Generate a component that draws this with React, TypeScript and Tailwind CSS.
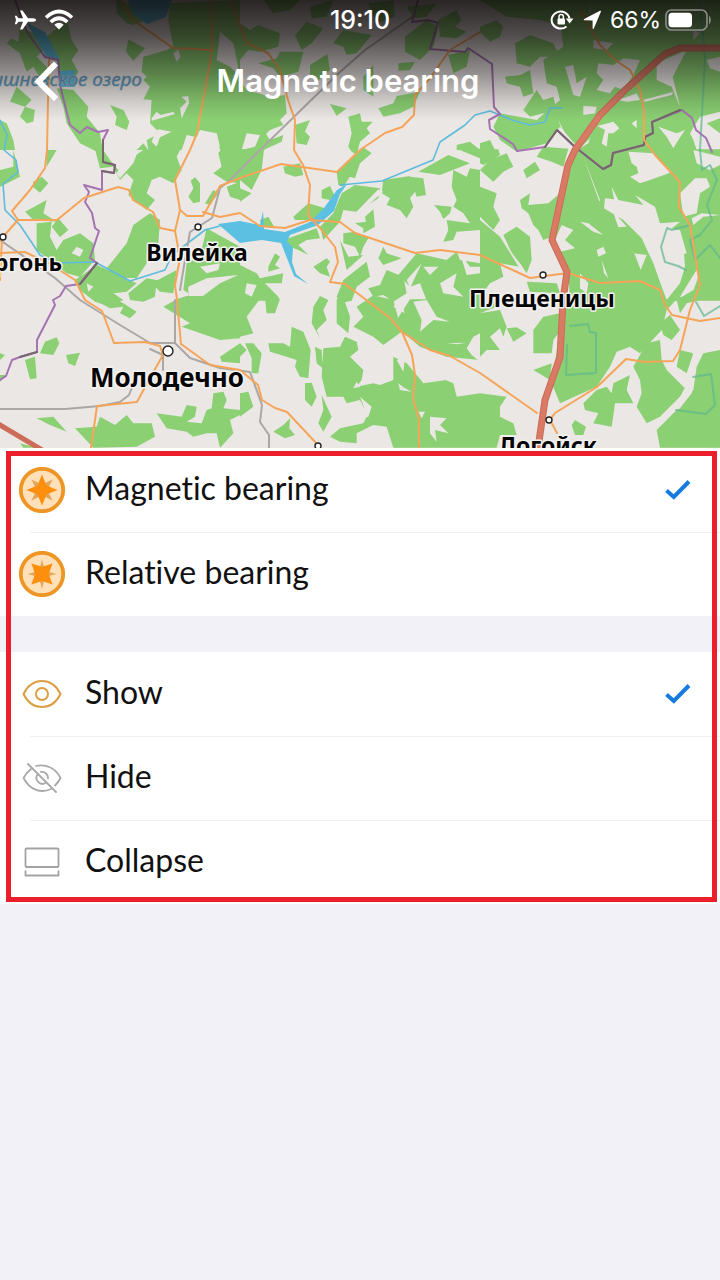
import { useState } from "react";
import type { ReactNode } from "react";

type Tile = { x: number; y: number; forest: string; clearings?: string };

/* Map tiles: 240 x 150 units each, geometry stored at three times that scale. */
const tiles: Tile[] = [
  {
    x: 0,
    y: 0,
    forest:
      "M510 10L720 0V450H660L650 400 600 390 590 412 560 405 545 450H445L440 420 480 400 450 370 455 300 430 298 450 260 430 240 440 230 425 215 430 170 500 150 520 140 505 60ZM350 40L350 0 420 20 440 60 400 75 380 70ZM385 118L435 145 400 182 378 155ZM60 80L100 100 130 150 110 170 140 200 150 240 130 250 100 200 80 215 60 160 20 130 35 115 55 125ZM140 110L200 60 215 120 235 150 215 180 235 215 220 240 180 250 175 180ZM170 265L220 270 265 320 260 350 300 400 308 452 285 452 240 430 200 370 190 320ZM330 315L370 330 388 365 380 390 345 375 350 350ZM60 350L75 320 105 330 100 365 80 370ZM50 260L95 300 75 320 30 305ZM410 450L430 430 445 450ZM0 360L20 370 40 420 45 450H0ZM205 330L240 305 250 315 220 340Z",
    clearings:
      "M455 355L470 335 482 345 520 335 525 342 455 362ZM545 290L565 288 567 310 545 355 540 325 560 305ZM465 400L475 388 515 395 480 412 470 440 455 425ZM595 395L650 400 660 440 640 415 600 412ZM520 160L535 148 542 170 530 185ZM660 95L700 130 720 230 690 200 650 180Z",
  },
  {
    x: 240,
    y: 0,
    forest:
      "M0 240L20 270 90 290 135 285 140 340 120 360 130 375 90 390 70 410 75 450 0 452ZM0 70L30 90 55 75 120 100 115 140 60 155 25 150 0 180ZM165 105L200 65 250 85 215 130 185 150ZM280 130L310 90 395 105 350 160 320 165 310 140ZM55 190L110 175 120 155 190 155 175 215 120 230 100 205ZM210 195L262 162 270 210 230 245 210 230ZM270 312L320 325 290 348ZM415 325L460 310 470 288 540 275 520 320 480 340 430 350ZM475 190L525 185 510 210 475 212ZM325 350L360 340 365 365 398 365 380 385 390 400 360 425 350 465 335 455 325 440 335 400ZM165 375L210 360 195 395 210 410 200 435 170 430ZM70 390L90 420 130 405 125 425 70 450ZM495 110L560 60 595 80 580 140 540 180 495 155ZM595 60L650 30 665 60 645 80 680 95 650 115 600 110ZM625 165L690 150 680 200 640 220ZM650 435L690 425 720 450 650 450ZM385 10L460 0 465 50 410 70ZM370 230L400 195 400 290 370 270ZM70 0H180L150 30 100 40ZM500 20L590 10 560 50 520 55ZM210 20L280 0 260 50 215 55Z",
    clearings: "M20 400L60 405 45 440 5 450ZM0 200L15 215 10 240 0 245Z",
  },
  {
    x: 480,
    y: 0,
    forest:
      "M240 60L330 40 340 0H720V450H300L240 380 200 430 110 455 60 420 40 380 60 340 170 360 240 300 230 260 200 250 190 180 250 140ZM105 130L150 105 220 130 240 170 180 170 150 200 110 190ZM75 230L120 225 150 210 160 280 130 290 120 260 80 250ZM130 330L170 270 190 300 220 290 230 330 150 350ZM0 80L50 60 70 80 60 110 30 125 0 95ZM0 0H340L320 60 250 80 180 60 80 50ZM0 430L30 420 45 450H0Z",
    clearings:
      "M355 190L400 195 430 175 480 180 460 225 430 270 405 260 390 280 350 270 370 240 350 220ZM255 200L280 195 290 250 320 230 300 290 280 285ZM530 190L620 150 578 230 600 320 575 260 530 240ZM235 360L275 440 258 425ZM310 318L350 320 345 340 310 345ZM352 378L400 365 418 385 400 400 385 400 380 440 365 430 375 390ZM300 445L330 415 325 430ZM535 380L590 400 615 390 595 420 580 445 560 410ZM630 400L660 350 720 335V355L680 370 720 400V450H650L640 420ZM680 180L720 170V215L690 205ZM415 300L470 280 480 300 440 305ZM490 300L580 275 575 285 495 305ZM340 120L400 130 380 150 340 145ZM640 90L660 100 640 120ZM455 370L470 360 470 385Z",
  },
  {
    x: 0,
    y: 150,
    forest:
      "M140 0H170L140 50ZM285 -2H308L330 30 355 60 400 20 430 0H540L530 20 545 60 520 100 480 80 455 90 440 130 465 150 440 180 385 135 400 90 380 70 360 90 340 50 300 55ZM100 95L125 80 145 100 120 128 98 110ZM75 185L140 150 130 190 170 215 100 210ZM155 230L175 205 205 240 180 262ZM110 220L155 215 150 260 170 300 190 270 240 250 280 280 285 330 240 380 200 370 110 300ZM320 355L380 280 400 225 450 190 480 210 475 280 440 310 440 340 410 385 350 380ZM225 390L290 345 410 400 380 425 340 430 370 450 330 470 285 455 240 420ZM385 430L440 385 470 390 465 440 430 455 390 450ZM455 400L530 360 520 430 480 425ZM655 10L665 -4 720 0V100L680 95 640 70 665 50ZM680 110L720 95V150L690 140ZM565 140L580 115 572 92 585 82 600 100 600 155 580 160ZM620 235L720 290V452H560L565 430 550 420 560 340 600 320ZM0 60L40 50 40 0 55 60 60 80 0 110ZM615 160L640 120 655 130 630 165Z",
    clearings:
      "M350 70L380 20 415 0 400 40 360 85ZM600 350L660 340 655 360 620 370ZM565 410L620 385 715 375 660 400 600 445 565 440ZM230 290L250 300 240 320 215 310ZM260 400L280 410 265 425Z",
  },
  {
    x: 240,
    y: 150,
    forest:
      "M0 -2H72L65 60 35 120 0 90ZM0 115L35 130 0 155ZM130 50L180 40 190 75 165 80 135 70ZM290 65L340 20 370 -8 395 10 360 40 345 85 330 80 310 110 295 105ZM160 200L205 160 255 175 230 210 165 210ZM245 120L270 108 285 140 270 150 245 145ZM60 210L85 200 105 235 65 230ZM305 130L345 105 420 115 415 145 350 185 310 180 300 215 250 270 240 230 280 190ZM130 270L230 235 240 265 200 270 175 285 205 315 175 300 150 290ZM430 90L510 78 525 125 510 145 520 170 500 205 480 180 440 165 450 145 425 130ZM510 80L550 85 558 135 530 140ZM535 65L625 15 690 40 600 75ZM650 -4H720V25ZM582 165L635 170 630 190 610 207 600 185ZM640 60L680 80 690 55 720 60V240L650 245 640 270 610 275 625 240 620 210 690 220 670 190 640 170 650 150 635 110ZM345 220L378 215 375 200 400 178 405 230 370 250 370 235ZM310 250L345 245 385 265 370 290 360 320 345 290 310 280ZM300 270L325 320 370 315 320 360ZM430 290L440 310 485 325 430 345 415 325ZM220 350L260 325 270 335 260 350 270 380 240 370ZM85 350L105 310 120 320 105 345 120 355 85 365ZM0 345L50 370 60 385 130 370 125 400 75 400 115 440 118 452H0ZM290 440L310 390 380 335 390 380 350 410 335 452 300 460ZM385 415L420 405 440 360 490 380 500 430 460 455 430 435 400 440ZM475 375L530 310 620 330 650 305 660 330 720 340V452H560L540 400 510 410Z",
    clearings:
      "M415 118L430 125 350 195 345 190ZM500 390L545 340 510 415ZM550 350L595 350 570 375ZM600 400L650 370 640 410 670 440 610 430ZM660 310L690 350 720 350V370L680 375ZM20 400L50 405 35 440 15 430Z",
  },
  {
    x: 480,
    y: 150,
    forest:
      "M290 -2H720V452H270L265 370 215 280 230 170ZM30 30L80 10 100 50 70 65 40 95 0 60ZM0 -2H55L60 15 10 45 0 40ZM130 60L165 35 180 60 140 85ZM0 110L50 130 40 170 60 210 40 240 0 200ZM120 150L150 130 145 165 205 160 240 130 215 260 190 270 175 240 160 225 145 190 125 175ZM70 255L110 230 150 260 155 330 140 370 120 340 100 320ZM190 -10L265 -4 250 50 215 35 170 20ZM0 210L60 260 120 350 60 340 70 380 30 400 0 440ZM140 395L230 400 240 430 150 425Z",
    clearings:
      "M445 5L520 10 575 65 560 72 510 90 480 100 450 80 475 70 470 50 455 40ZM372 175L375 145 402 148 395 110 415 150 490 165 465 135 525 170 540 220 600 215 570 240 610 280 615 350 600 400 560 450 545 410 520 340 485 265 430 210ZM560 235L600 240 620 310 555 330ZM300 215L325 220 370 255 340 245ZM398 182L440 230 415 232ZM645 85L680 85 690 110 660 130 650 190 610 200 600 130ZM445 290L460 310 500 315 482 360 465 315ZM245 225L280 240 255 270 285 295 240 305 225 270ZM350 300L370 290 378 310 355 320ZM640 0L720 20V45L690 60 650 40ZM365 330L385 385 372 370ZM635 205L665 190 720 195 670 200 640 225ZM60 260L130 355 122 360ZM300 370L325 400 320 430 300 415ZM310 20L360 150 358 155ZM640 375L650 360 655 380 630 450 600 440Z",
  },
  {
    x: 0,
    y: 300,
    forest:
      "M285 0L330 -10 350 0 370 10 410 35 390 55 360 40 370 20 330 25ZM530 -2L560 -12H720V115L660 120 545 80 570 70 490 20ZM120 160L135 125 170 112 178 130 160 165ZM198 165L240 158 225 198 205 190ZM75 180L105 170 110 235 90 238ZM110 355L160 350 200 395 150 375ZM225 385L290 380 300 350 345 375 380 345 400 370 455 370 465 410 410 440 280 443ZM470 340L545 350 560 315 590 320 585 350 560 365 605 370 620 330 635 325 640 280 670 275 680 300 670 325 720 330V345L690 360 700 400 660 443 650 400 620 400 580 410 560 395 500 385ZM660 170L720 130V190L665 185ZM0 160L15 165 0 180ZM0 225H20L0 245ZM60 430L110 443H70Z",
  },
  {
    x: 240,
    y: 300,
    forest:
      "M0 -2H60L50 10 20 50 40 100 0 110ZM75 -4H120L105 40 80 40ZM220 20L240 -12 265 0 250 30 260 60 230 90 240 115 215 70ZM290 -2H312L330 50 325 100 290 70ZM340 80L370 50 350 20 400 -14 460 0 485 95 430 135 400 110ZM470 60L510 -2H720V180L620 170 540 140 480 90ZM15 130L40 130 65 160 55 220 35 220 35 175ZM85 130L130 130 150 140 155 80 190 95 212 150 205 235 180 230 165 200 170 180 140 170 90 155ZM195 250L215 248 230 290 215 320 195 300ZM225 140L245 150 248 205 230 190ZM250 145L300 140 315 110 350 125 355 150 330 170 370 210 365 240 350 260 400 250 420 255 460 240 460 170 500 190 530 225 550 250 620 240 720 280V443H460L440 380 400 375 350 400 350 430 300 425 270 410 300 385 370 370 385 340 370 320 360 300 320 310 310 290 260 290 245 230ZM245 285L275 350 250 395 235 370 250 330ZM100 395L130 375 150 355 148 385 165 405 135 415ZM0 280L25 275 40 320 0 350ZM0 130L20 150 0 170Z",
    clearings:
      "M545 60L520 5 560 0 590 50 630 65 580 60 540 95ZM680 145L700 110 720 100V185L695 165ZM475 250L490 262 515 275 480 270ZM360 290L395 320 385 350 320 365 375 330ZM570 350L620 355 600 375 625 400 585 390 590 425 570 400ZM535 335L555 335 545 355ZM460 20L480 0 495 40ZM620 130L680 128 650 133ZM360 260L340 265 350 245ZM470 180L495 170 490 215ZM605 235L640 250 650 290 720 280V235Z",
  },
  {
    x: 480,
    y: 300,
    forest:
      "M0 40L60 30 80 80 70 110 60 85 30 110 60 150 20 150 0 170ZM0 25L40 0 50 20 0 40ZM80 85L110 82 140 100 100 125ZM160 90L190 50 240 40 235 100 220 120 215 160 160 160ZM250 25L270 -2H590L560 30 545 90 480 160 450 140 410 155 390 200 350 260 240 310 215 250ZM540 70L570 45 600 90 575 120 550 105ZM500 130L540 120 545 180 560 210 620 270 540 350 500 370 470 320 485 280 480 240 460 200ZM310 310L350 270 380 260 395 280 400 250 450 225 440 270 460 310 405 310 395 380 340 370 355 340 315 330ZM275 375L285 360 318 380 310 405 285 405ZM650 200L670 160 720 150V443H540L530 390 590 330 640 270ZM0 280L80 290 60 320 60 350 100 370 110 405 60 405 50 443 0 443ZM590 200L600 150 640 160 620 220ZM160 210L215 190 210 240ZM590 0L640 -30 660 0 620 10 600 40Z",
    clearings: "M635 225L645 225 635 280 600 325 500 385 590 310Z",
  },
];

const roads = [
  "49 60 48 100 47 150 45 168 30 190 12 211 18 220 57 220 84 198 118 187 129 190 133 200 153 212 160 228 175 231",
  "211 0 212 50 205 90 197 133 190 150 175 180 180 210 175 231 180 258 175 285 177 300 181 344",
  "120 0 133 20 173 48 212 50",
  "180 210 187 216 203 216 220 186 240 178 281 164 337 172 360 150 385 133 402 127 414 115 415 95 430 78 450 50 480 32",
  "230 0 247 43 268 53 280 70 288 100 295 120 294 150 303 165 310 185 308 215 320 228 335 247 338 262 330 282 345 284 365 299 390 318 402 332 430 350 450 356 480 373 537 413",
  "203 212 220 217 240 213 260 226 285 228 310 220 340 222 355 233 415 253 440 250 480 255 530 278 568 273 600 283 640 281 660 290 665 305 672 315 700 321 720 318",
  "402 332 412 355 415 375 413 398 419 420 419 448",
  "580 10 600 45 615 60 630 70 640 90 644 110 644 140 655 155 680 182 679 207 690 225 700 285 690 310 680 350 673 361 645 362 626 359 597 387 555 413 550 420 557 433",
  "0 253 25 252 50 264 75 280 85 300 102 311 114 343 145 342 160 346 163 355 150 378 137 402 97 406 91 448",
  "181 344 210 365 240 370 258 385 262 400 275 408 287 412 317 444",
  "18 220 2 238 0 280",
];

const borders = [
  "15 0 27 32 45 57 58 60 60 85 70 125 80 133 87 127 98 132 108 130 103 140 103 162 115 165 114 173 102 171 102 190 84 185 89 192 85 202 92 213 95 228 99 231 90 258 97 263 80 284 66 286 60 296 53 300 55 305 37 340 37 352 20 357 12 360 6 376 0 380",
  "418 0 412 22 428 20 438 23 430 49 465 52 468 48 480 56 492 64 494 107 500 114 489 120 490 129 513 144 517 151 545 147 557 130 575 147 603 169 611 165 613 153 644 145 645 137 653 133 652 122 682 110 692 118 696 130 706 138 712 152",
];

const railways = [
  "415 15 365 50 340 72 260 150 228 182 220 188 212 218 190 232 185 260 180 290",
  "175 300 175 343 150 343 120 325 80 300 55 278 0 240",
  "175 343 190 358 220 368 250 372 262 405 260 422 269 435 269 448",
  "150 349 163 355 163 370",
  "133 385 129 395 120 402 100 406 65 409 0 409",
];

const rivers = [
  "0 120 7 135 4 150 16 160 18 172 3 184 5 210 20 225 40 255 55 263 95 262 130 281 165 270 172 255 205 230 220 226",
  "340 185 382 181 433 160 440 142 465 125 475 115 490 111 512 120 530 125 545 122 550 108 562 108",
];

const parks = [
  "570 326 588 324 590 332 596 333 596 373 566 375 567 345",
  "690 225 672 230 667 228 661 247 665 262 678 266 686 270",
  "700 0 705 60 700 150 702 170 710 165 717 180 707 205 712 220 700 235 690 240 695 260 710 245 720 258",
  "696 302 704 316 720 306",
  "676 410 706 414 715 405 711 374 693 377",
];

function Labels() {
  return (
    <g
      fill="#050505"
      stroke="#f4f2f0"
      strokeWidth="3"
      strokeLinejoin="round"
      fontWeight="700"
      fontFamily="'Noto Sans', 'Open Sans', sans-serif"
      fontSize="23"
      paintOrder="stroke"
    >
      <text x="62" y="271" textAnchor="end">Сморгонь</text>
      <text x="197" y="261" textAnchor="middle">Вилейка</text>
      <text x="542" y="307" textAnchor="middle">Плещеницы</text>
      <text x="548" y="454" textAnchor="middle">Логойск</text>
      <text x="167" y="387" textAnchor="middle" fontSize="26">Молодечно</text>
      <text
        x="142"
        y="86"
        textAnchor="end"
        fontSize="19"
        fontWeight="400"
        fontStyle="italic"
        fill="#5a9cc4"
        stroke="#c9c9c9"
        strokeWidth="1"
      >
        Вишневское озеро
      </text>
    </g>
  );
}

function MapView() {
  return (
    <svg
      viewBox="0 0 720 448"
      preserveAspectRatio="xMidYMid slice"
      className="absolute inset-0 h-full w-full"
      aria-label="Map"
      role="img"
    >
      <defs>
        <linearGradient id="shade" x1="0" y1="0" x2="0" y2="1">
          <stop offset="0" stopColor="#0a0606" stopOpacity="0.86" />
          <stop offset="0.3" stopColor="#0a0606" stopOpacity="0.68" />
          <stop offset="0.6" stopColor="#0a0606" stopOpacity="0.4" />
          <stop offset="0.85" stopColor="#0a0606" stopOpacity="0.12" />
          <stop offset="1" stopColor="#0a0606" stopOpacity="0" />
        </linearGradient>
      </defs>
      <rect width="720" height="448" fill="#ebe7e5" />
      {tiles.map((t) => (
        <g key={`${t.x}-${t.y}`} transform={`translate(${t.x} ${t.y}) scale(0.33334)`}>
          <path d={t.forest} fill="#8bd073" />
          {t.clearings && <path d={t.clearings} fill="#ebe7e5" />}
        </g>
      ))}
      <g fill="#5cc0e3">
        <path d="M26 22L45 32 60 60 46 56ZM128 0H172L166 17 147 24 133 14ZM59 71L75 70 75 87 60 87Z" />
        <path d="M218 224L240 221 260 225 263 211 264 229 285 232 310 222 324 208 337 190 347 184 340 194 334 211 318 225 290 235 287 241 293 248 292 262 296 274 308 284 294 276 281 243 262 240 240 243Z" />
      </g>
      <g fill="none" strokeLinejoin="round" strokeLinecap="round">
        <g stroke="#5ebbdc" strokeWidth="1.6">
          {rivers.map((p) => <polyline key={p} points={p} />)}
        </g>
        <g stroke="#5fb88f" strokeWidth="2" opacity="0.7">
          {parks.map((p) => <polyline key={p} points={p} />)}
        </g>
        <g stroke="#aaa7a6" strokeWidth="2">
          {railways.map((p) => <polyline key={p} points={p} />)}
        </g>
        <g stroke="#a573b1" strokeWidth="2">
          {borders.map((p) => <polyline key={p} points={p} />)}
        </g>
        <path
          d="M103 140V162L115 165 114 173 102 171M97 263L80 284M37 352L20 357M545 147L557 130 575 147 603 169 611 165 613 153 644 145 645 137 653 133 652 122 680 110"
          stroke="#77666d"
          strokeWidth="2"
        />
        <g stroke="#f5a458" strokeWidth="2">
          {roads.map((p) => <polyline key={p} points={p} />)}
        </g>
        <g stroke="#cd6c58" strokeWidth="7">
          <polyline points="730 48 680 48 665 54 625 90 600 115 575 150 568 165 552 240 567 272 563 300 560 357 545 400 537 455" />
          <path d="M-5 422L42 450" strokeWidth="5" />
        </g>
        <polyline
          points="730 48 680 48 665 54 625 90 600 115 575 150 568 165 552 240 567 272 563 300 560 357 545 400 537 455"
          stroke="#d97a65"
          strokeWidth="5"
        />
      </g>
      <g fill="#fff" stroke="#222" strokeWidth="1.4">
        <circle cx="198" cy="227" r="3" />
        <circle cx="3" cy="237" r="3" />
        <circle cx="168" cy="351" r="5" />
        <circle cx="543" cy="275" r="3" />
        <circle cx="549" cy="420" r="3" />
        <circle cx="318" cy="446" r="3" />
      </g>
      <Labels />
      <rect width="720" height="120" fill="url(#shade)" />
    </svg>
  );
}

function StatusBar() {
  return (
    <div className="relative grid h-10 grid-cols-3 items-center px-3 text-white">
      <div className="flex items-center gap-2">
        <svg width="24" height="22" viewBox="0 0 24 22" fill="currentColor" aria-hidden="true">
          <path d="M24 11c0 1-1.300 1.700-3 1.700h-5L10.500 20.500H8L11 12.700H6.500L4.500 15.200H2.800L4 11 2.800 6.800h1.700L6.500 9.300H11L8 1.500h2.500L16 9.300h5c1.700 0 3 .7 3 1.700Z" />
        </svg>
        <svg width="30" height="22" viewBox="0 0 30 22" fill="none" stroke="currentColor" strokeWidth="3.600" aria-hidden="true">
          <path d="M2 8.500Q15-3.500 28 8.500M6.700 13Q15 5.500 23.300 13" />
          <path d="M15 20.500L10.300 15.700Q15 11.800 19.700 15.700Z" fill="currentColor" stroke="none" />
        </svg>
      </div>
      <time className="text-center text-[25px] leading-7 font-medium">19:10</time>
      <div className="-mr-1 flex items-center justify-end gap-1">
        <svg width="24" height="22" viewBox="0 0 24 22" fill="none" aria-hidden="true" className="mr-1">
          <path d="M16.500 17.500A9 8.500 0 1 1 19.500 9.500" stroke="#fff" strokeWidth="2" />
          <path d="M15.800 9.500H23.500L19.600 14.500Z" fill="#fff" />
          <rect x="7.500" y="9.500" width="7.500" height="6" rx="1" fill="#fff" />
          <path d="M9 10V7.800a2.200 2.200 0 0 1 4.400 0V10" stroke="#fff" strokeWidth="1.500" />
        </svg>
        <svg width="20" height="20" viewBox="0 0 20 20" fill="currentColor" aria-hidden="true" className="mr-1">
          <path d="M19 1.500L11.800 18.600q-.8 1-1.200-.2V10.400L2.200 10.300q-1.200-.5 0-1.200L18 .8q1.200-.3 1 .7Z" />
        </svg>
        <span className="text-[23px] leading-7">66%</span>
        <svg width="47" height="22" viewBox="0 0 47 22" fill="none" aria-hidden="true">
          <rect x="1" y="1" width="41" height="20" rx="5.500" stroke="#8d8b8b" strokeWidth="1.600" />
          <rect x="3.500" y="3.700" width="23.500" height="14.600" rx="3.500" fill="#fff" />
          <path d="M44.500 7.500Q46.300 11 44.500 14.500Z" fill="#8d8b8b" stroke="#8d8b8b" />
        </svg>
      </div>
    </div>
  );
}

const ring = <circle cx="23" cy="23" r="21.2" fill="#ffe0b8" stroke="#ee9524" strokeWidth="3.8" />;

const MagneticIcon = (
  <svg width="46" height="46" viewBox="0 0 46 46" aria-hidden="true">
    {ring}
    <path d="M12.500 12.500L23 17.500 33.500 12.500 28.500 23 33.500 33.500 23 28.500 12.500 33.500 17.500 23Z" fill="#e3a55a" />
    <path d="M23 7.500L27.500 18.500 38.500 23 27.500 27.500 23 38.500 18.500 27.500 7.500 23 18.500 18.500Z" fill="#fd8f0c" />
  </svg>
);

const RelativeIcon = (
  <svg width="46" height="46" viewBox="0 0 46 46" aria-hidden="true">
    {ring}
    <path d="M23 8.500L26 20 37.500 23 26 26 23 38 20 26 8.500 23 20 20Z" fill="#e3a55a" />
    <path d="M12.500 12.500L23 15.800 33.500 12.500 29.800 23 33.500 33.500 23 30 12.500 33.500 16 23Z" fill="#fd8f0c" />
  </svg>
);

const EyeIcon = (
  <svg width="40" height="30" viewBox="0 0 40 30" fill="none" stroke="#dd9f43" strokeWidth="2" aria-hidden="true">
    <path d="M1.500 15C10-2.300 30-2.300 38.500 15 30 32.300 10 32.300 1.500 15Z" strokeLinejoin="round" />
    <circle cx="20" cy="15" r="6" />
  </svg>
);

const EyeOffIcon = (
  <svg width="40" height="30" viewBox="0 0 40 30" fill="none" stroke="#a9a9a9" strokeWidth="1.800" strokeLinecap="round" aria-hidden="true">
    <path d="M9 6Q4.500 9.500 1.500 15C8 27.500 19.500 30.500 29 26M14 3C23.500.500 33.500 5 38.500 15Q36.300 19.500 33 22.500" />
    <path d="M15.500 11.500A6 6 0 0 0 23.500 20M19 9A6 6 0 0 1 26 15.500M6 1L34 29" />
  </svg>
);

const CollapseIcon = (
  <svg width="36" height="30" viewBox="0 0 36 30" fill="none" stroke="#a3a3a3" strokeWidth="1.800" strokeLinejoin="round" aria-hidden="true">
    <rect x="1.500" y="1.500" width="33" height="18.500" rx="1" />
    <path d="M1.500 23.500V28.500H34.500V23.500" />
  </svg>
);

type Option = { id: string; label: string; icon: ReactNode };

const bearingOptions: Option[] = [
  { id: "magnetic", label: "Magnetic bearing", icon: MagneticIcon },
  { id: "relative", label: "Relative bearing", icon: RelativeIcon },
];

const visibilityOptions: Option[] = [
  { id: "show", label: "Show", icon: EyeIcon },
  { id: "hide", label: "Hide", icon: EyeOffIcon },
  { id: "collapse", label: "Collapse", icon: CollapseIcon },
];

function OptionList({ name, options, initial }: { name: string; options: Option[]; initial: string }) {
  const [value, setValue] = useState(initial);
  return (
    <div role="radiogroup" aria-label={name} className="bg-white">
      {options.map((o, i) => (
        <label key={o.id} className="relative block cursor-pointer">
          <input
            type="radio"
            name={name}
            value={o.id}
            checked={value === o.id}
            onChange={() => setValue(o.id)}
            className="sr-only"
          />
          {i > 0 && <span className="-mb-px ml-[30px] block h-px bg-[#f0f0f2]" />}
          <span className="flex h-[84px] items-center gap-5 pr-7 pl-[19px]">
            <span className="flex w-[46px] shrink-0 justify-center">{o.icon}</span>
            <span className="grow pb-1 font-['Lato',sans-serif] text-[32px] leading-10 text-[#111] [font-variant-ligatures:none]">
              {o.label}
            </span>
            {value === o.id && (
              <svg width="28" height="22" viewBox="0 0 28 22" fill="none" stroke="#167be0" strokeWidth="4" aria-hidden="true">
                <path d="M2.500 11.500L9.800 18 25 2.500" />
              </svg>
            )}
          </span>
        </label>
      ))}
    </div>
  );
}

export default function App() {
  return (
    <div className="min-h-screen bg-[#f2f1f7] font-['Inter',sans-serif]">
      <header className="relative h-[448px] overflow-hidden">
        <MapView />
        <StatusBar />
        <div className="relative grid grid-cols-[80px_1fr_80px] items-center text-white">
          <button type="button" aria-label="Back" className="flex justify-end pr-5">
            <svg width="26" height="40" viewBox="0 0 26 40" fill="none" stroke="currentColor" strokeWidth="6" aria-hidden="true">
              <path d="M22 2.500L4.500 20.500 22 38" />
            </svg>
          </button>
          <h1 className="pr-6 text-center text-[31px] leading-[82px] font-semibold">Magnetic bearing</h1>
        </div>
      </header>
      <main className="relative">
        <OptionList name="Bearing" options={bearingOptions} initial="magnetic" />
        <div className="h-9" />
        <OptionList name="Visibility" options={visibilityOptions} initial="show" />
        <div className="pointer-events-none absolute top-[3px] right-[3px] bottom-[2px] left-[6px] border-5 border-[#ea1f2b]" />
      </main>
    </div>
  );
}
